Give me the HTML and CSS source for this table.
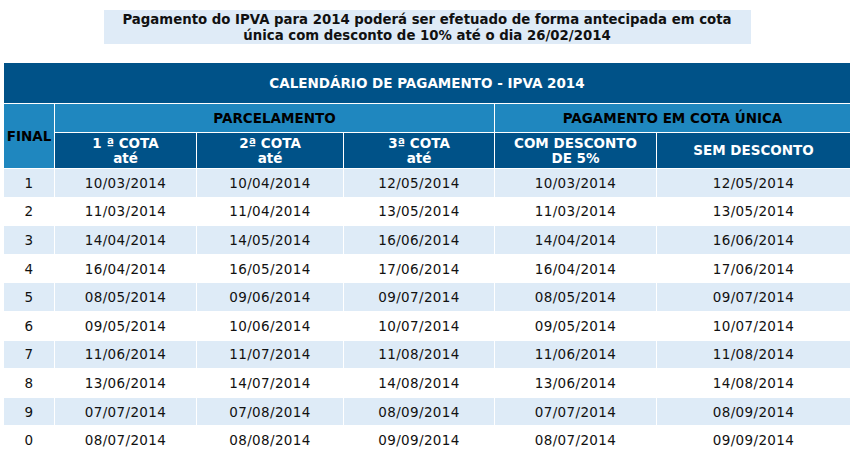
FILE: index.html
```html
<!DOCTYPE html>
<html lang="pt-BR">
<head>
<meta charset="utf-8">
<title>Calendário de Pagamento - IPVA 2014</title>
<link rel="stylesheet" href="styles.css">
</head>
<body>
<div class="notice">Pagamento do IPVA para 2014 poderá ser efetuado de forma antecipada em cota<br>única com desconto de 10% até o dia 26/02/2014</div>
<table class="cal">
<colgroup>
<col class="c-final"><col class="c1"><col class="c2"><col class="c3"><col class="c4"><col class="c5">
</colgroup>
<thead>
<tr class="r-title"><th colspan="6">CALENDÁRIO DE PAGAMENTO - IPVA 2014</th></tr>
<tr class="r-group"><th class="final" rowspan="2">FINAL</th><th colspan="3">PARCELAMENTO</th><th colspan="2">PAGAMENTO EM COTA ÚNICA</th></tr>
<tr class="r-head"><th>1 ª COTA<br>até</th><th>2ª COTA<br>até</th><th>3ª COTA<br>até</th><th>COM DESCONTO<br>DE 5%</th><th>SEM DESCONTO</th></tr>
</thead>
<tbody>
<tr class="odd"><td>1</td><td>10/03/2014</td><td>10/04/2014</td><td>12/05/2014</td><td>10/03/2014</td><td>12/05/2014</td></tr>
<tr><td>2</td><td>11/03/2014</td><td>11/04/2014</td><td>13/05/2014</td><td>11/03/2014</td><td>13/05/2014</td></tr>
<tr class="odd"><td>3</td><td>14/04/2014</td><td>14/05/2014</td><td>16/06/2014</td><td>14/04/2014</td><td>16/06/2014</td></tr>
<tr><td>4</td><td>16/04/2014</td><td>16/05/2014</td><td>17/06/2014</td><td>16/04/2014</td><td>17/06/2014</td></tr>
<tr class="odd"><td>5</td><td>08/05/2014</td><td>09/06/2014</td><td>09/07/2014</td><td>08/05/2014</td><td>09/07/2014</td></tr>
<tr><td>6</td><td>09/05/2014</td><td>10/06/2014</td><td>10/07/2014</td><td>09/05/2014</td><td>10/07/2014</td></tr>
<tr class="odd"><td>7</td><td>11/06/2014</td><td>11/07/2014</td><td>11/08/2014</td><td>11/06/2014</td><td>11/08/2014</td></tr>
<tr><td>8</td><td>13/06/2014</td><td>14/07/2014</td><td>14/08/2014</td><td>13/06/2014</td><td>14/08/2014</td></tr>
<tr class="odd"><td>9</td><td>07/07/2014</td><td>07/08/2014</td><td>08/09/2014</td><td>07/07/2014</td><td>08/09/2014</td></tr>
<tr><td>0</td><td>08/07/2014</td><td>08/08/2014</td><td>09/09/2014</td><td>08/07/2014</td><td>09/09/2014</td></tr>
</tbody>
</table>
</body>
</html>
```
FILE: styles.css
```css
html, body {
  margin: 0;
  padding: 0;
  background: #ffffff;
}
body {
  padding: 10px 3px 0 3px;
  font-family: "DejaVu Sans", Verdana, sans-serif;
  color: #111111;
}
.notice {
  width: 647px;
  height: 34px;
  box-sizing: border-box;
  margin: 0 auto;
  background: #dfebf7;
  text-align: center;
  font-weight: bold;
  font-size: 13.3px;
  line-height: 16px;
  padding: 2px 0 0 0;
  color: #111111;
  white-space: nowrap;
}
.cal {
  margin-top: 18px;
  border-collapse: separate;
  border-spacing: 1px;
  table-layout: fixed;
  width: 848px;
  font-size: 13.5px;
}
.c-final { width: 50px; }
.c1 { width: 141px; }
.c2 { width: 146px; }
.c3 { width: 150px; }
.c4 { width: 161px; }
.c5 { width: 193px; }
.cal th, .cal td {
  padding: 0;
  text-align: center;
  vertical-align: middle;
  white-space: nowrap;
}
.cal th {
  font-weight: bold;
  letter-spacing: 0;
}
.r-title th {
  height: 40px;
  background: #005288;
  color: #ffffff;
}
.r-group th {
  height: 28px;
  background: #1f87bf;
  color: #000000;
}
.r-group th.final {
  background: #1f87bf;
  color: #000000;
}
.r-head th {
  height: 35px;
  background: #005288;
  color: #ffffff;
  line-height: 15px;
}
.cal td {
  height: 27.6px;
  color: #111111;
  letter-spacing: 0.35px;
}
.cal tr.odd td {
  background: #deebf7;
}
```
